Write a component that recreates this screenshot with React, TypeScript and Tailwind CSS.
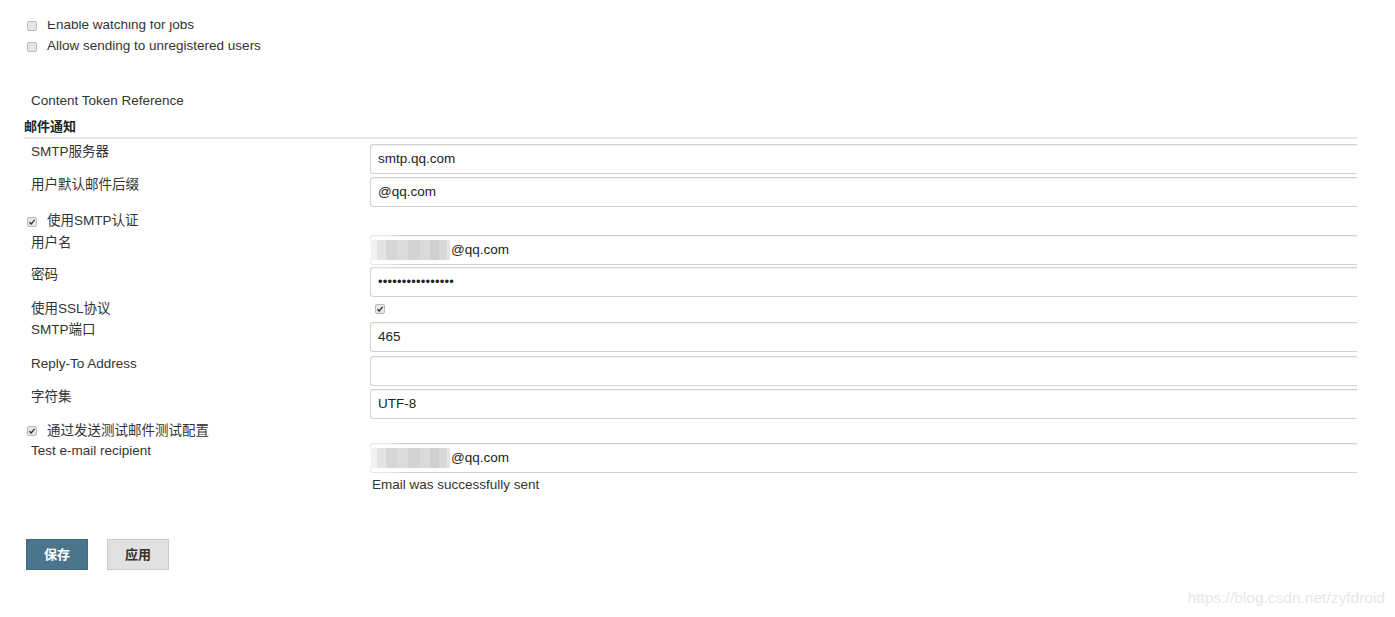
import { ReactNode } from "react";

const font = { fontFamily: '"Liberation Sans", Arial, "Noto Sans CJK SC", sans-serif' };

const Box = ({ checked }: { checked?: boolean }) => (
  <span className="inline-flex items-center justify-center w-[10px] h-[10px] rounded-[2px] border border-[#b9b9b9] bg-[#e6e6e6] shrink-0">
    {checked && (
      <svg viewBox="0 0 10 10" className="w-[8px] h-[8px]">
        <path d="M1.8 5.2 L4 7.4 L8.3 2.4" fill="none" stroke="#333" strokeWidth="1.7" />
      </svg>
    )}
  </span>
);

const CheckRow = ({ label, checked, className = "" }: { label: string; checked?: boolean; className?: string }) => (
  <div className={`flex items-center pl-[27px] ${className}`}>
    <Box checked={checked} />
    <span className="ml-[10px]">{label}</span>
  </div>
);

const Field = ({ children, className = "" }: { children?: ReactNode; className?: string }) => (
  <div
    className={`flex-1 h-[30px] flex items-center pl-[7px] border border-r-0 border-[#d2d2d2] rounded-l-[3px] shadow-[inset_0_1px_1px_rgba(0,0,0,0.06)] text-[13.5px] text-[#222] ${className}`}
  >
    {children}
  </div>
);

const Row = ({ label, children, className = "" }: { label: string; children?: ReactNode; className?: string }) => (
  <div className={`flex ${className}`}>
    <div className="w-[346px] pl-[7px] leading-[16px]">{label}</div>
    {children}
  </div>
);

// blurred-out part of the e-mail address
const Mosaic = () => (
  <span className="relative flex items-center -ml-[7px] mr-[1px]">
    <span className="absolute -left-[10px] -top-[4px] w-[40px] h-[28px] rounded-full bg-white blur-[4px]" />
    <span className="relative flex h-[20px] blur-[0.6px]">
      <span className="w-[6px] bg-[#f2f2f2]" />
      <span className="w-[9px] bg-[#e4e4e4]" />
      <span className="w-[11px] bg-[#d6d6d6]" />
      <span className="w-[11px] bg-[#dcdcdc]" />
      <span className="w-[12px] bg-[#d3d3d3]" />
      <span className="w-[10px] bg-[#dadada]" />
      <span className="w-[9px] bg-[#cfcfcf]" />
      <span className="w-[8px] bg-[#d8d8d8]" />
      <span className="w-[3px] bg-[#e4e4e4]" />
    </span>
  </span>
);

export default function App() {
  return (
    <div className="relative w-[1395px] h-[617px] bg-white text-[13.5px] text-[#333] overflow-hidden" style={font}>
      <div className="mt-[21px] h-[15px] overflow-hidden">
        <CheckRow label="Enable watching for jobs" className="-mt-[6px] h-[21px]" />
      </div>
      <CheckRow label="Allow sending to unregistered users" className="h-[21px]" />

      <div className="mt-[35px] h-[18px] flex items-center pl-[31px]">Content Token Reference</div>

      <div className="ml-[24px] w-[1333px]">
        <div className="mt-[9px] h-[20px] flex items-center pb-[2px] border-b-2 border-[#e6e6e6] font-bold text-[13px] text-[#222]">
          邮件通知
        </div>

        <Row label="SMTP服务器" className="mt-[5px]">
          <Field>smtp.qq.com</Field>
        </Row>
        <Row label="用户默认邮件后缀" className="mt-[3px]">
          <Field>@qq.com</Field>
        </Row>
        <CheckRow label="使用SMTP认证" checked className="h-[28px] -ml-[24px] pt-[1px]" />
        <Row label="用户名">
          <Field>
            <Mosaic />
            @qq.com
          </Field>
        </Row>
        <Row label="密码" className="mt-[2px]">
          <Field>
            <span className="tracking-[0.2px] text-[13px]">••••••••••••••••</span>
          </Field>
        </Row>
        <div className="flex h-[25px] items-center">
          <div className="w-[346px] pl-[7px]">使用SSL协议</div>
          <span className="ml-[5px]">
            <Box checked />
          </span>
        </div>
        <Row label="SMTP端口">
          <Field>465</Field>
        </Row>
        <Row label="Reply-To Address" className="mt-[4px]">
          <Field />
        </Row>
        <Row label="字符集" className="mt-[3px]">
          <Field>UTF-8</Field>
        </Row>
        <CheckRow label="通过发送测试邮件测试配置" checked className="h-[24px] -ml-[24px]" />
        <Row label="Test e-mail recipient">
          <Field>
            <Mosaic />
            @qq.com
          </Field>
        </Row>
        <div className="flex mt-[3px] h-[18px] items-center">
          <div className="w-[348px]" />
          <span>Email was successfully sent</span>
        </div>
      </div>

      <div className="mt-[45px] ml-[26px] flex gap-[19px]">
        <button className="w-[62px] h-[31px] bg-[#4b758b] border border-[#3f6a80] text-white text-[13px] font-bold">
          保存
        </button>
        <button className="w-[62px] h-[31px] bg-[#e1e1e1] border border-[#c9c9c9] text-[#333] text-[13px] font-bold">
          应用
        </button>
      </div>

      <div className="absolute right-[10px] bottom-[8px] text-[15.5px] text-[#e7e7e7]">
        https://blog.csdn.net/zyfdroid
      </div>
    </div>
  );
}
